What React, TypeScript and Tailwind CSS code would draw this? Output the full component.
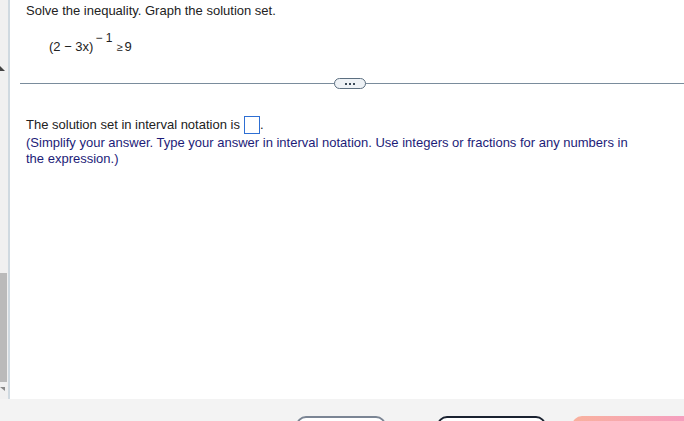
import React from "react";

/* ============================================================
   Question panel
============================================================ */

function Divider() {
  return (
    <div className="relative mt-[23px] ml-[10px] flex h-[11px] items-center">
      <div className="h-px w-full bg-[#7a8c9c]" />
      <div className="absolute left-[314px] top-0 flex h-[11px] w-[32px] items-center justify-center gap-[2px] rounded-full border border-[#5c6f80] bg-[#eef2f6]">
        <span className="h-[2px] w-[2px] bg-[#3b4a58]" />
        <span className="h-[2px] w-[2px] bg-[#3b4a58]" />
        <span className="h-[2px] w-[2px] bg-[#3b4a58]" />
      </div>
    </div>
  );
}

export default function App() {
  return (
    <div
      className="flex h-[421px] w-[684px] flex-col overflow-hidden bg-white"
      style={{ fontFamily: '"Liberation Sans", Arial, sans-serif' }}
    >
      <div className="flex h-[399px]">
        {/* scrollbar */}
        <div className="relative w-[8px] bg-[#f0f0f0]">
          <div className="absolute left-0 top-[66px] h-0 w-0 border-b-[5px] border-r-[5px] border-b-[#444] border-r-transparent" />
          <div className="absolute left-0 top-[273px] h-[109px] w-[7px] bg-[#bababa]" />
          <div className="absolute left-0 top-[387px] h-0 w-0 border-t-[4px] border-l-[5px] border-t-[#888] border-l-transparent" />
        </div>
        <div className="w-[2px] bg-[#cfd9e0]" />

        <div className="flex-1 text-[13px] leading-[16px] text-[#222]">
          <p className="ml-[16px] mt-[3px]">
            Solve the inequality. Graph the solution set.
          </p>

          <div className="ml-[39px] mt-[13px] flex items-start">
            <span className="mt-[7px]">(2 − 3x)</span>
            <span className="ml-[2px] text-[12px] leading-[12px]">
              − 1
            </span>
            <span className="mt-[7px] ml-[4px] text-[11px]">≥</span>
            <span className="mt-[7px] ml-[2px]">9</span>
          </div>

          <Divider />

          <div className="ml-[16px] mt-[27px] flex items-center">
            <span>The solution set in interval notation is</span>
            <span className="ml-[4px] inline-block h-[18px] w-[16px] border border-[#2e6fd3]" />
            <span>.</span>
          </div>

          <p className="ml-[16px] mt-px w-[610px] text-[#1c1c78]">
            (Simplify your answer. Type your answer in interval notation. Use
            integers or fractions for any numbers in the expression.)
          </p>
        </div>
      </div>

      {/* bottom bar */}
      <div className="relative flex-1 bg-[#f3f3f3]">
        <div className="absolute left-[296px] top-[17px] h-[20px] w-[90px] rounded-[10px] border-2 border-[#7b8594] bg-white" />
        <div className="absolute left-[437px] top-[17px] h-[20px] w-[109px] rounded-[10px] border-2 border-[#1a2230] bg-white" />
        <div className="absolute left-[572px] top-[17px] h-[20px] w-[130px] rounded-[10px] bg-gradient-to-r from-[#f9b19d] to-[#f59bc4]" />
      </div>
    </div>
  );
}
